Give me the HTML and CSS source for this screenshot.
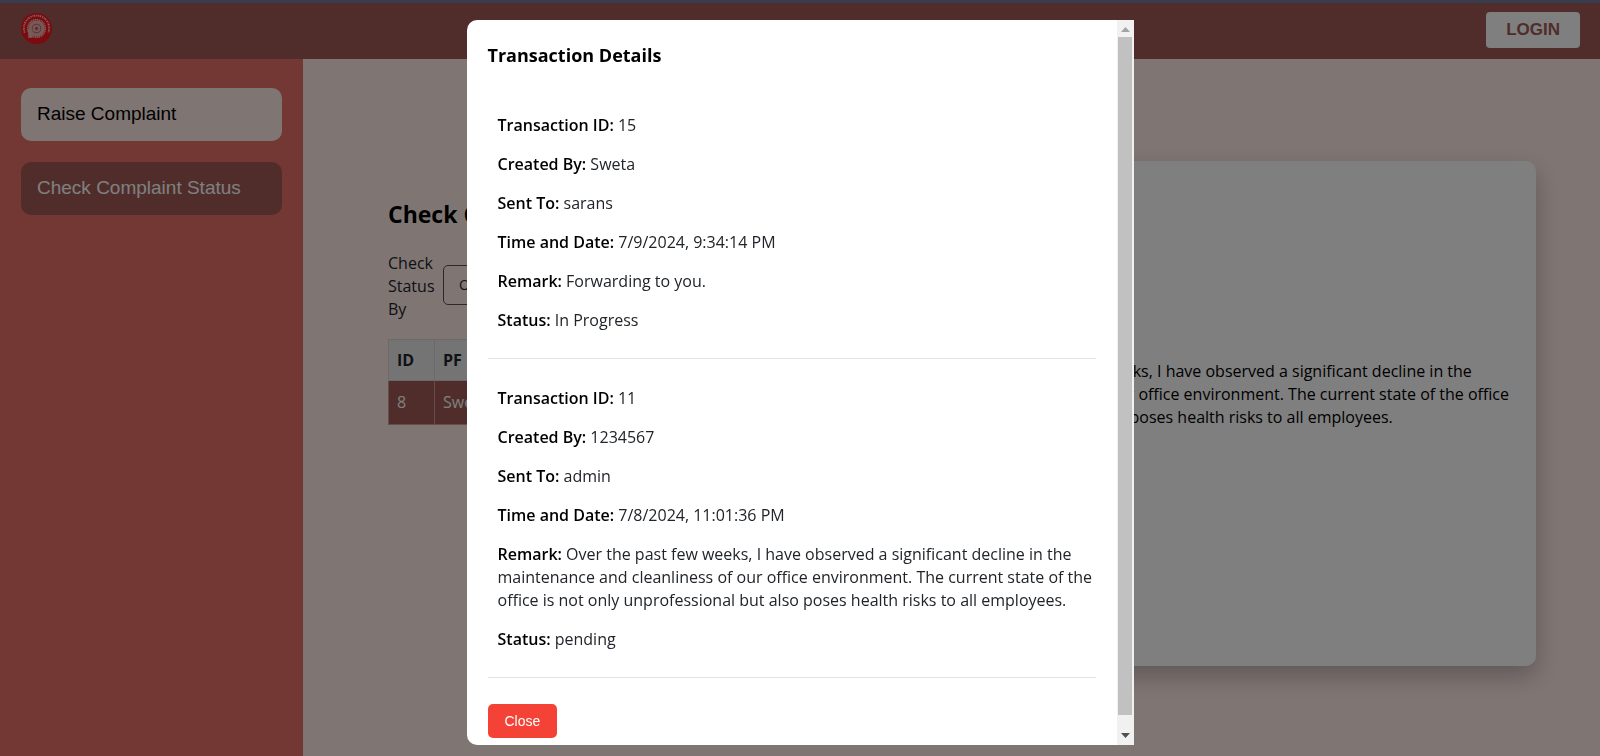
FILE: index.html
```html
<!DOCTYPE html>
<html lang="en">
<head>
<meta charset="utf-8">
<meta name="viewport" content="width=device-width, initial-scale=1">
<title>Check Complaint Status</title>
<link rel="stylesheet" href="styles.css">
</head>
<body>
<div class="page">
  <header class="header">
    <svg class="logo" viewBox="0 0 30 30" aria-label="Railway logo" role="img">
      <circle cx="15" cy="15" r="15" fill="#f8141c"/>
      <path d="M3.600 19A12.200 12.200 0 1 1 26.400 19" fill="none" stroke="#ffc9c6" stroke-width="1.800" stroke-dasharray="1.200 .7 .8 .6 1.500 1"/>
      <circle cx="15" cy="15" r="8.500" fill="none" stroke="#f0bcb9" stroke-width="1.600" stroke-dasharray="1.400 .5"/>
      <circle cx="15" cy="15" r="7.800" fill="#eeb2af"/>
      <circle cx="15" cy="15" r="4.200" fill="none" stroke="#c96a69" stroke-width="1"/>
      <circle cx="15" cy="15" r="1.600" fill="#c05a5a"/>
      <path d="M7 16h4v8H7z" fill="#efb8b5"/>
    </svg>
    <button class="login" type="button">LOGIN</button>
  </header>
  <div class="layout">
    <nav class="sidebar">
      <a class="nav-item" href="#raise">Raise Complaint</a>
      <a class="nav-item active" href="#status">Check Complaint Status</a>
    </nav>
    <main class="main">
      <section class="check">
        <h2 class="check-title">Check Complaint Status</h2>
        <div class="field">
          <label class="field-label" for="by">Check Status By</label>
          <select class="field-select" id="by"><option>Open complaints</option></select>
        </div>
        <table class="table">
          <thead><tr><th>ID</th><th>PF</th><th>Status</th></tr></thead>
          <tbody><tr><td>8</td><td>Sweta</td><td>In Progress</td></tr></tbody>
        </table>
      </section>
      <section class="card">
        <p><strong>Description:</strong> Over the past few weeks, I have observed a significant decline in the maintenance and cleanliness of our office environment. The current state of the office is not only unprofessional but also poses health risks to all employees.</p>
      </section>
    </main>
  </div>
</div>
<div class="overlay">
  <div class="modal" role="dialog" aria-modal="true" aria-labelledby="modal-title">
    <div class="modal-body">
      <h3 class="modal-title" id="modal-title">Transaction Details</h3>
      <div class="item">
        <p><strong>Transaction ID:</strong> 15</p>
        <p><strong>Created By:</strong> Sweta</p>
        <p><strong>Sent To:</strong> sarans</p>
        <p><strong>Time and Date:</strong> 7/9/2024, 9:34:14 PM</p>
        <p><strong>Remark:</strong> Forwarding to you.</p>
        <p><strong>Status:</strong> In Progress</p>
      </div>
      <div class="item">
        <p><strong>Transaction ID:</strong> 11</p>
        <p><strong>Created By:</strong> 1234567</p>
        <p><strong>Sent To:</strong> admin</p>
        <p><strong>Time and Date:</strong> 7/8/2024, 11:01:36 PM</p>
        <p><strong>Remark:</strong> Over the past few weeks, I have observed a significant decline in the maintenance and cleanliness of our office environment. The current state of the office is not only unprofessional but also poses health risks to all employees.</p>
        <p><strong>Status:</strong> pending</p>
      </div>
      <button class="close" type="button">Close</button>
    </div>
    <div class="scrollbar" aria-hidden="true">
      <svg class="arrow" viewBox="0 0 17 17"><path d="M4 12L8.500 7L13 12Z" fill="#a3a3a3"/></svg>
      <div class="thumb"></div>
      <svg class="arrow" viewBox="0 0 17 17"><path d="M4 5H13L8.500 10Z" fill="#505050"/></svg>
    </div>
  </div>
</div>
</body>
</html>
```
FILE: styles.css
```css
* { box-sizing: border-box; }
body {
  margin: 0;
  font: 16px/23px "Open Sans", "Noto Sans", sans-serif;
  color: #212529;
}
p { margin: 0; }
strong { color: #000; font-weight: 600; }
.page {
  display: flex;
  flex-direction: column;
  min-height: 100vh;
  background: #ffece8;
}
.header {
  display: flex;
  align-items: flex-start;
  justify-content: space-between;
  padding: 9px 20px 11px 21px;
  background: #a05a56;
  border-top: 3px solid #6f7a9c;
}
.logo { width: 31px; height: 33px; }
.login {
  padding: 8px 20px;
  border: 0;
  border-radius: 4px;
  background: #fff;
  color: #a05a56;
  font: bold 17px/20px "Liberation Sans", sans-serif;
}
.layout { display: flex; flex: 1; }
.sidebar {
  display: flex;
  flex-direction: column;
  gap: 21px;
  flex: 0 0 303px;
  padding: 29px 21px;
  background: #e67068;
}
.nav-item {
  padding: 14px 16px 15px;
  border-radius: 10px;
  background: #ffece8;
  color: #000;
  font: 19px/24px "Liberation Sans", sans-serif;
  text-decoration: none;
}
.nav-item.active { background: #a05a56; color: #fff; }
.main {
  display: flex;
  flex: 1;
  gap: 20px;
  padding: 102px 64px 90px 85px;
}
.check { flex: 2; padding-top: 37px; }
.check-title {
  margin: 0 0 22px;
  color: #000;
  font-size: 23px;
  line-height: 32px;
  font-weight: 700;
}
.field {
  display: flex;
  align-items: center;
  gap: 10px;
  margin-bottom: 18px;
}
.field-label { width: 45px; }
.field-select {
  flex: 1;
  height: 40px;
  margin-bottom: 4px;
  padding: 0 11px;
  border: 1px solid #5c5250;
  border-radius: 5px;
  background: #ffece8;
  font: 14px "Open Sans", sans-serif;
  color: #212529;
}
.table { width: 100%; border-collapse: collapse; }
.table th, .table td {
  padding: 9px 8px 8px;
  border: 1px solid #d8d2d0;
  text-align: left;
}
.table th { background: #e8e8e8; font-weight: 700; }
.table td { padding: 10px 8px; background: #a05a56; color: #fff; border-color: #c99b98; }
.table th:first-child { width: 46px; }
.card {
  flex: 3;
  display: flex;
  align-items: center;
  padding: 0 20px 38px 30px;
  border-radius: 10px;
  background: #fff;
  box-shadow: 0 10px 25px rgba(0, 0, 0, .25);
  color: #000;
}
.overlay {
  position: fixed;
  inset: 0;
  display: flex;
  justify-content: center;
  align-items: flex-start;
  padding: 20px 0 11px;
  background: rgba(0, 0, 0, .5);
}
.modal {
  display: flex;
  width: 90%;
  max-width: 667px;
  background: #fff;
  border-radius: 10px 0 0 10px;
  overflow: hidden;
}
.modal-body { flex: 1; padding: 21px 21px 7px; }
.modal-title {
  margin: 0 0 17px;
  color: #000;
  font-size: 18px;
  line-height: 28px;
  font-weight: 700;
}
.item {
  display: flex;
  flex-direction: column;
  gap: 16px;
  padding: 28px 0 26px 10px;
  border-bottom: 1px solid #e2e2e2;
}
.close {
  display: block;
  margin-top: 26px;
  padding: 7px 17px;
  border: 0;
  border-radius: 5px;
  background: #f44336;
  color: #fff;
  font: 14px/20px "Liberation Sans", sans-serif;
}
.scrollbar {
  display: flex;
  flex-direction: column;
  width: 17px;
  background: #f1f1f1;
}
.arrow { width: 17px; height: 17px; }
.thumb { flex: 1; margin: 0 2px 13px 1px; background: #c1c1c1; }
```
